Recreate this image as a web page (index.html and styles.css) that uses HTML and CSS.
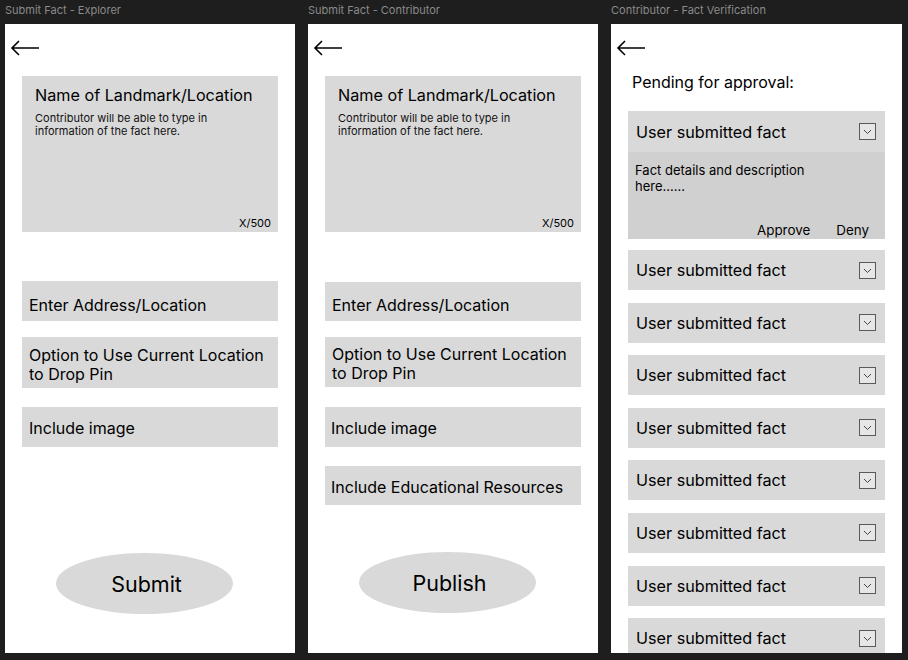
FILE: index.html
```html
<!DOCTYPE html>
<html>
<head>
	<meta charset="UTF-8">
	<title>Submit Fact Wireframes</title>
	<link rel="stylesheet" href="styles.css">
</head>
<body>
	<div class="canvas">

		<!-- explorer -->
		<section class="screen">
			<div class="label">Submit Fact - Explorer</div>
			<div class="frame">
				<div class="back">
					<svg width="30" height="16" viewBox="0 0 30 16"><path d="M29 8H2M9 1L2 8l7 7" fill="none" stroke="#000" stroke-width="1.6"/></svg>
				</div>
				<div class="textbox">
					<div class="tb-title">Name of Landmark/Location</div>
					<div class="tb-hint">Contributor will be able to type in<br>information of the fact here.</div>
					<div class="tb-count">X/500</div>
				</div>
				<div class="field addr">Enter Address/Location</div>
				<div class="field tall">Option to Use Current Location<br>to Drop Pin</div>
				<div class="field img">Include image</div>
				<div class="pill">Submit</div>
			</div>
		</section>

		<!-- contributor -->
		<section class="screen">
			<div class="label">Submit Fact - Contributor</div>
			<div class="frame">
				<div class="back">
					<svg width="30" height="16" viewBox="0 0 30 16"><path d="M29 8H2M9 1L2 8l7 7" fill="none" stroke="#000" stroke-width="1.6"/></svg>
				</div>
				<div class="textbox">
					<div class="tb-title">Name of Landmark/Location</div>
					<div class="tb-hint">Contributor will be able to type in<br>information of the fact here.</div>
					<div class="tb-count">X/500</div>
				</div>
				<div class="field addr c2">Enter Address/Location</div>
				<div class="field tall c2">Option to Use Current Location<br>to Drop Pin</div>
				<div class="field img c2">Include image</div>
				<div class="field edu">Include Educational Resources</div>
				<div class="pill pill-2">Publish</div>
			</div>
		</section>

		<!-- verification -->
		<section class="screen wide">
			<div class="label">Contributor - Fact Verification</div>
			<div class="frame">
				<div class="back">
					<svg width="30" height="16" viewBox="0 0 30 16"><path d="M29 8H2M9 1L2 8l7 7" fill="none" stroke="#000" stroke-width="1.6"/></svg>
				</div>
				<div class="pending">Pending for approval:</div>

				<div class="fact open">
					<div class="fact-head">User submitted fact <span class="chk"></span></div>
					<div class="fact-body">
						<div class="fact-desc">Fact details and description<br>here......</div>
						<div class="fact-actions"><span>Approve</span><span>Deny</span></div>
					</div>
				</div>
				<div class="fact"><div class="fact-head">User submitted fact <span class="chk"></span></div></div>
				<div class="fact"><div class="fact-head">User submitted fact <span class="chk"></span></div></div>
				<div class="fact"><div class="fact-head">User submitted fact <span class="chk"></span></div></div>
				<div class="fact"><div class="fact-head">User submitted fact <span class="chk"></span></div></div>
				<div class="fact"><div class="fact-head">User submitted fact <span class="chk"></span></div></div>
				<div class="fact"><div class="fact-head">User submitted fact <span class="chk"></span></div></div>
				<div class="fact"><div class="fact-head">User submitted fact <span class="chk"></span></div></div>
				<div class="fact"><div class="fact-head">User submitted fact <span class="chk"></span></div></div>
			</div>
		</section>

	</div>
</body>
</html>
```

FILE: styles.css
```css
body {
	margin: 0;
	background: #1e1e1e;
	font-family: Inter, "Liberation Sans", sans-serif;
	color: #000;
}
.canvas {
	display: flex;
	gap: 13px;
	padding-left: 5px;
	height: 660px;
	overflow: hidden;
}
.screen {
	width: 290px;
	flex: none;
}
.screen.wide {
	width: 291px;
}
.label {
	height: 24px;
	line-height: 20px;
	font-size: 11px;
	color: #8a8a8a;
}
.frame {
	background: #fff;
	height: 629px;
	overflow: hidden;
	padding: 16px 0 0 0;
	box-sizing: border-box;
}
.back {
	height: 16px;
	padding-left: 5px;
}
.back svg {
	display: block;
}

/* text area */
.textbox {
	margin: 20px 17px 0;
	height: 156px;
	background: #d9d9d9;
	padding: 9px 13px 0;
	box-sizing: border-box;
	position: relative;
}
.tb-title {
	font-size: 16.2px;
	line-height: 20px;
}
.tb-hint {
	font-size: 11px;
	line-height: 13px;
	margin-top: 7px;
	color: #111;
}
.tb-count {
	position: absolute;
	right: 7px;
	bottom: 2px;
	font-size: 11px;
}

/* grey fields */
.field {
	margin: 0 17px;
	background: #d9d9d9;
	font-size: 16px;
	line-height: 19px;
	padding: 0 7px;
	display: flex;
	align-items: center;
	height: 40px;
	box-sizing: border-box;
}
.field.addr {
	margin-top: 49px;
	padding-top: 9px;
}
.field.tall {
	margin-top: 16px;
	height: 51px;
	padding-top: 4px;
}
.field.img {
	margin-top: 19px;
	padding-top: 2px;
}
.field.c2.addr {
	margin-top: 50px;
	height: 39px;
	padding-top: 8px;
}
.field.c2.tall {
	height: 50px;
}
.field.c2.img {
	margin-top: 20px;
	padding-left: 6px;
	padding-top: 2px;
}
.field.edu {
	margin-top: 19px;
	height: 39px;
	padding-left: 6px;
	padding-top: 4px;
}
.pill {
	width: 177px;
	height: 61px;
	margin: 106px 0 0 51px;
	padding-left: 4px;
	box-sizing: border-box;
	border-radius: 50%;
	background: #d9d9d9;
	font-size: 21.5px;
	display: flex;
	align-items: center;
	justify-content: center;
}
.pill-2 {
	margin-top: 47px;
}

/* verification list */
.pending {
	margin: 16px 0 0 21px;
	font-size: 16px;
	line-height: 20px;
}
.fact {
	margin: 0 17px 12.6px;
	width: 257px;
	background: #d9d9d9;
}
.fact.open {
	margin-top: 19px;
	margin-bottom: 11px;
}
.fact-head {
	height: 40px;
	display: flex;
	align-items: center;
	justify-content: space-between;
	padding: 0 8px;
	font-size: 16.2px;
}
.fact.open .fact-head {
	height: 41px;
}
.chk {
	width: 15px;
	height: 15px;
	border: 1px solid #5a5a5a;
	background: #e6e6e6 url("data:image/svg+xml;utf8,<svg xmlns='http://www.w3.org/2000/svg' width='15' height='15'><path d='M4 6l3.5 3.5L11 6' fill='none' stroke='%23444' stroke-width='1'/></svg>") no-repeat center;
	margin-right: 1px;
}
.fact-body {
	background: #d0d0d0;
	height: 87px;
	padding: 10px 7px 0;
	box-sizing: border-box;
	display: flex;
	flex-direction: column;
	justify-content: space-between;
}
.fact-desc {
	font-size: 13px;
	line-height: 16px;
}
.fact-actions {
	display: flex;
	justify-content: flex-end;
	gap: 26px;
	font-size: 13.4px;
	padding: 0 9px 1px 0;
}
```
